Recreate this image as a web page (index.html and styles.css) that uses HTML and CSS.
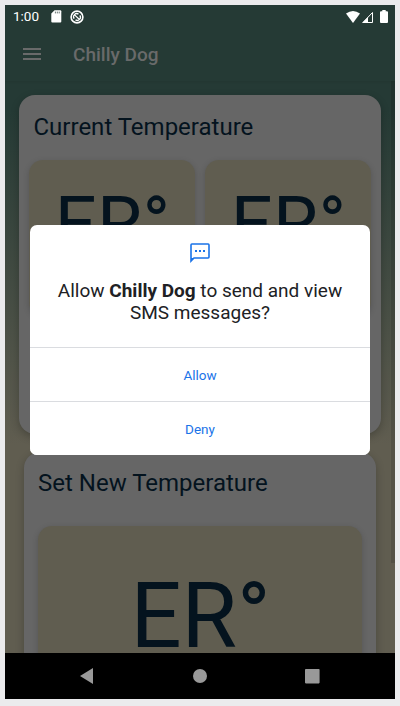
FILE: index.html
```
<!DOCTYPE html>
<html lang="en">
<head>
<meta charset="utf-8">
<title>Chilly Dog</title>
<link rel="stylesheet" href="styles.css">
</head>
<body>
<div class="screen">
  <header class="top">
    <div class="status">
      <span class="clock">1:00</span>
      <svg class="sd" width="11" height="13" viewBox="0 0 11 13"><path d="M3.6.3H9.3Q10.3.3 10.3 1.3V11.6Q10.3 12.6 9.3 12.6H1.3Q.3 12.6.3 11.6V3.6Z" fill="#fff"/><path d="M4.4 1.6v1.8M6.3 1.6v1.8M8.2 1.6v1.8" stroke="#253a35" stroke-width=".7"/></svg>
      <svg class="sync" width="14" height="14" viewBox="0 0 14 14"><circle cx="7" cy="7" r="5.9" fill="none" stroke="#fff" stroke-width="1.6"/><path d="M4.2 8.7A3.2 3.2 0 0 1 8.5 4.1M9.8 5.3A3.2 3.2 0 0 1 5.5 9.9M4.6 4.9L9.7 9.7" fill="none" stroke="#fff" stroke-width="1.3"/></svg>
      <span class="spacer"></span>
      <svg class="wifi" width="14" height="12" viewBox="0 0 14 12"><path d="M0 2.6Q7-2.4 14 2.6L7 12Z" fill="#fff"/></svg>
      <svg class="signal" width="12" height="12" viewBox="0 0 12 12"><path d="M1 11.5L10.5 1.5V11.5Z" fill="none" stroke="#fff"/><path d="M0 12L6 6V12Z" fill="#fff"/></svg>
      <svg class="battery" width="8" height="13" viewBox="0 0 8 13"><path d="M2.3 0H5.7V1.3H7Q8 1.3 8 2.3V12Q8 13 7 13H1Q0 13 0 12V2.3Q0 1.3 1 1.3H2.3Z" fill="#fff"/></svg>
    </div>
    <div class="appbar">
      <svg width="18" height="12" viewBox="0 0 18 12"><path d="M0 1H18M0 6H18M0 11H18" stroke="#696a6a" stroke-width="2"/></svg>
      <h1>Chilly Dog</h1>
    </div>
  </header>
  <main class="content">
    <section class="card current">
      <h2>Current Temperature</h2>
      <div class="tiles">
        <div class="tile">ER°</div>
        <div class="tile">ER°</div>
      </div>
    </section>
    <section class="card target">
      <h2>Set New Temperature</h2>
      <div class="tile large">ER°</div>
    </section>
    <div class="scrollbar"></div>
  </main>
  <nav class="nav">
    <svg width="13" height="16" viewBox="0 0 13 16"><path d="M13 0V16L0 8Z" fill="#999"/></svg>
    <svg class="home" width="14" height="14" viewBox="0 0 14 14"><circle cx="7" cy="7" r="7" fill="#999"/></svg>
    <svg width="15" height="15" viewBox="0 0 15 15"><rect width="14.6" height="14.4" rx=".8" fill="#999"/></svg>
  </nav>
  <div class="dialog">
    <div class="prompt">
      <svg width="20" height="20" viewBox="0 0 20 20"><path d="M1 17.8V1.9Q1 1 1.9 1H18.1Q19 1 19 1.9V14.1Q19 15 18.1 15H4L1 18Z" fill="none" stroke="#1a73e8" stroke-width="1.6"/><path d="M1 15H4L1 18Z" fill="#1a73e8"/><path d="M5 7H7V9H5ZM9 7H11V9H9ZM13 7H15V9H13Z" fill="#1a73e8"/></svg>
      <p>Allow <b>Chilly Dog</b> to send and view<br>SMS messages?</p>
    </div>
    <button>Allow</button>
    <button>Deny</button>
  </div>
</div>
</body>
</html>
```
FILE: styles.css
```
* { box-sizing: border-box; }
body {
  margin: 0;
  padding: 5px;
  height: 706px;
  background: #ebebed;
  font-family: Roboto, sans-serif;
  overflow: hidden;
}
h1, h2, p { margin: 0; font-weight: 400; }
svg { display: block; flex: none; }
.screen {
  position: relative;
  width: 390px;
  height: 694px;
  display: flex;
  flex-direction: column;
  background: linear-gradient(#253a35 95px, #253a35 105px, #605d50 440px);
  overflow: hidden;
}
.top { height: 76px; flex: none; background: #253a35; box-shadow: 0 1px 2px rgba(0,0,0,.08); }
.status { display: flex; align-items: center; height: 23px; padding: 0 7px 0 8px; }
.clock { width: 38px; color: #fff; font-size: 13.5px; line-height: 23px; }
.sync { margin-left: 8px; }
.spacer { flex: 1; }
.signal { margin: 0 6px 0 2px; }
.appbar { display: flex; align-items: center; height: 53px; padding: 0 18px; gap: 32px; }
.appbar svg { margin-bottom: 2px; }
.appbar h1 { font-size: 19px; font-weight: 500; line-height: 24px; color: #696a6a; }
.content { position: relative; flex: 1; min-height: 0; padding: 14px; overflow: hidden; }
.card { border-radius: 16px; background: #666; box-shadow: 0 3px 8px rgba(0,0,0,.24); color: #04131e; }
.card h2 { font-size: 24px; line-height: 30px; }
.current { height: 339px; padding: 17px 10px 0; }
.current h2 { padding-left: 4.5px; }
.tiles { display: flex; justify-content: space-between; margin-top: 18px; }
.tile {
  width: 166px;
  height: 156px;
  border-radius: 14px;
  background: #605d50;
  box-shadow: 0 2px 6px rgba(0,0,0,.18);
  font-size: 74px;
  line-height: 127px;
  text-align: center;
}
.tiles .tile { padding-left: 1px; }
.target { height: 339px; margin: 18px 5px 0; padding: 16px 14px 0; }
.tile.large { width: 324px; height: 270px; margin-top: 28px; padding-left: 1px; font-size: 90px; line-height: 182px; }
.scrollbar { position: absolute; top: 0; right: 0; width: 4px; height: 482px; background: rgba(0,0,0,.12); }
.nav { height: 46px; flex: none; display: flex; align-items: center; justify-content: space-between; padding: 0 75px; background: #000; }
.nav .home { margin-left: 2px; }
.dialog {
  position: absolute;
  top: 220px;
  left: 25px;
  width: 340px;
  height: 230px;
  display: flex;
  flex-direction: column;
  background: #fff;
  border-radius: 7px;
  overflow: hidden;
}
.prompt { flex: 1; display: flex; flex-direction: column; align-items: center; padding-top: 18px; }
.prompt p { margin-top: 17px; font-size: 19px; line-height: 22px; color: #202124; text-align: center; white-space: nowrap; }
.dialog button {
  height: 54px;
  padding: 1px 0 0;
  border: 0;
  border-top: 1px solid #dadce0;
  background: #fff;
  color: #1a73e8;
  font: 400 13.5px Roboto, sans-serif;
}
```
